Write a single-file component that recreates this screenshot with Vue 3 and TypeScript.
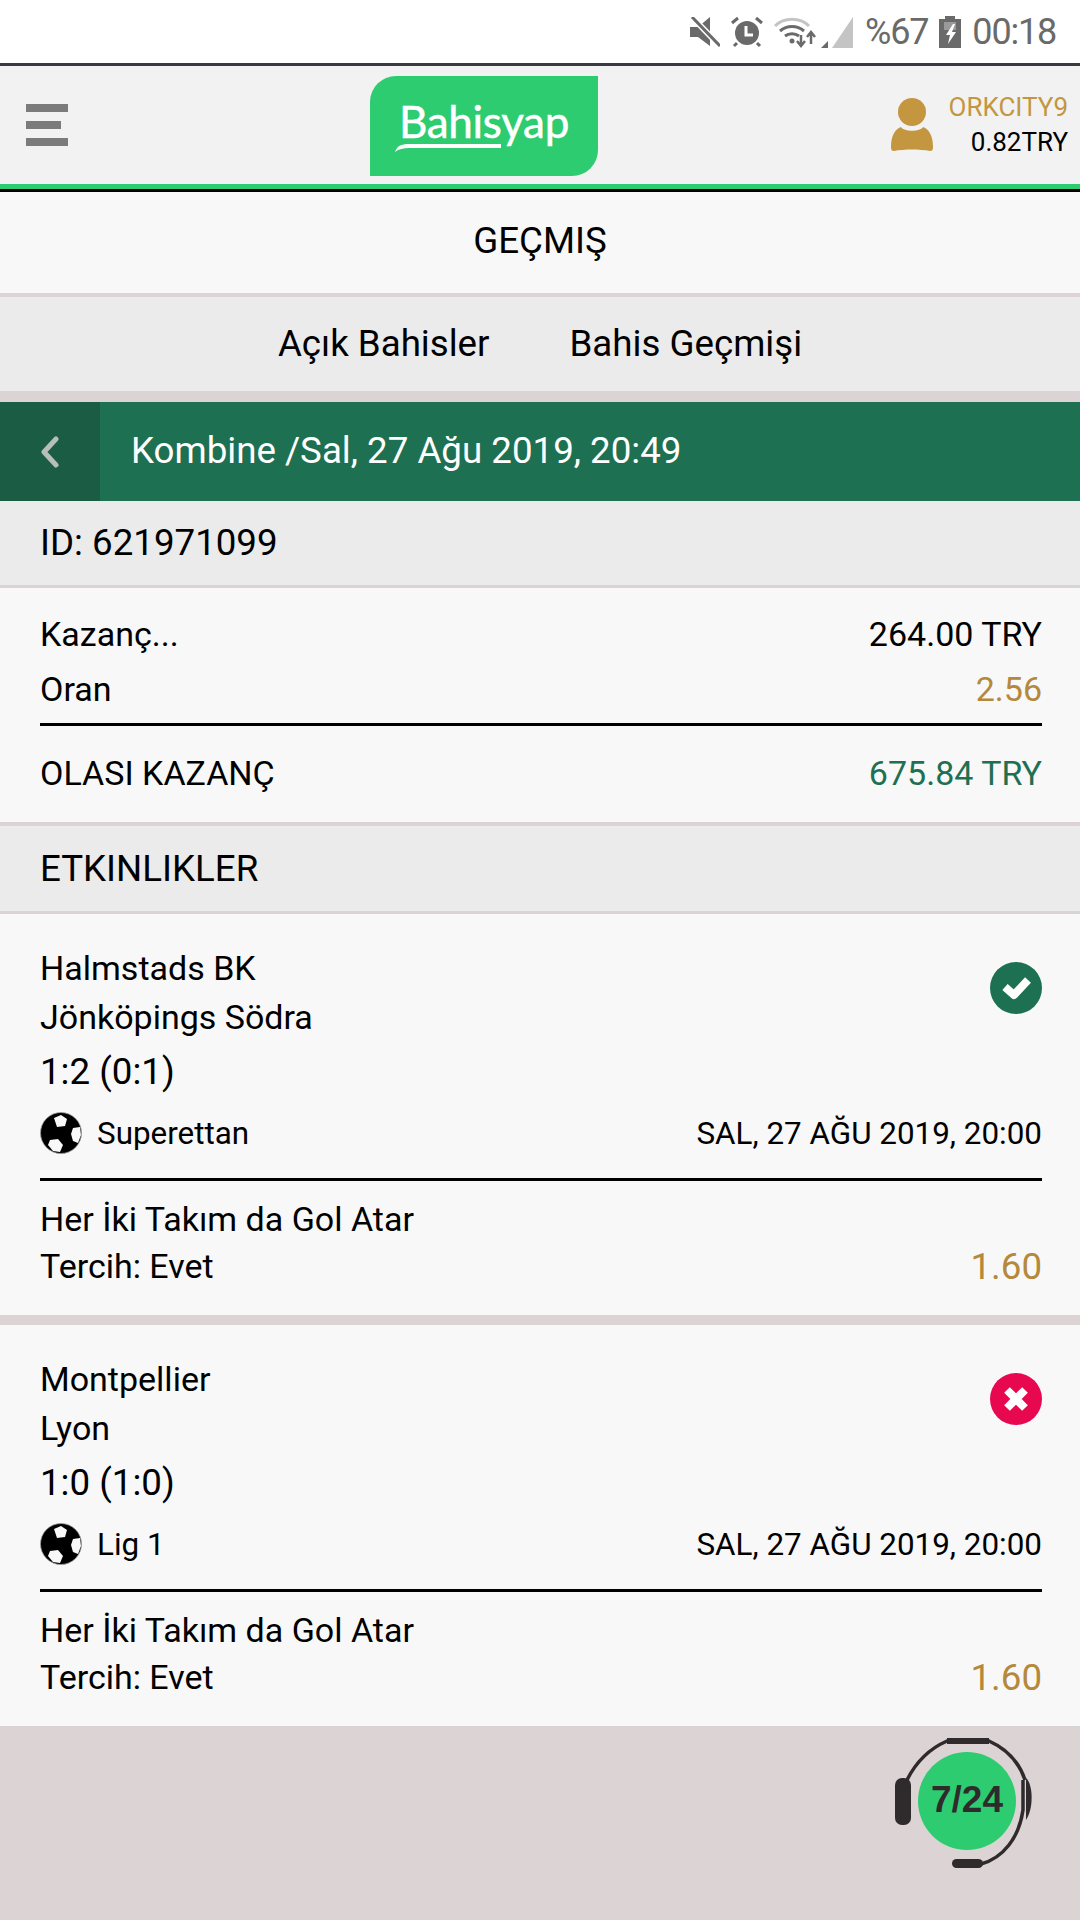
<script setup lang="ts">
interface BetEvent {
  home: string
  away: string
  score: string
  league: string
  date: string
  market: string
  pick: string
  odd: string
  won: boolean
}

const events: BetEvent[] = [
  {
    home: 'Halmstads BK',
    away: 'Jönköpings Södra',
    score: '1:2 (0:1)',
    league: 'Superettan',
    date: 'SAL, 27 AĞU 2019, 20:00',
    market: 'Her İki Takım da Gol Atar',
    pick: 'Tercih: Evet',
    odd: '1.60',
    won: true
  },
  {
    home: 'Montpellier',
    away: 'Lyon',
    score: '1:0 (1:0)',
    league: 'Lig 1',
    date: 'SAL, 27 AĞU 2019, 20:00',
    market: 'Her İki Takım da Gol Atar',
    pick: 'Tercih: Evet',
    odd: '1.60',
    won: false
  }
]
</script>

<template>
  <div class="page">
    <div class="status">
      <svg class="st-mute" viewBox="0 0 30 30" width="30" height="30">
        <path d="M0 10h8L20 0v29L8 20H0z" fill="#6a6a6a" />
        <path d="M2 0l28 29" stroke="#fff" stroke-width="6" fill="none" />
        <path d="M2 0l28 29" stroke="#6a6a6a" stroke-width="3" fill="none" />
      </svg>
      <svg class="st-alarm" viewBox="0 0 32 32" width="32" height="32">
        <circle cx="16" cy="17" r="12" fill="#6a6a6a" />
        <path d="M1 7l6-5M31 7l-6-5M6 27l-3 3M26 27l3 3" stroke="#6a6a6a" stroke-width="3" fill="none" />
        <path d="M15 10v9h7" stroke="#fff" stroke-width="3" fill="none" />
      </svg>
      <svg class="st-wifi" viewBox="0 0 44 32" width="44" height="32">
        <path d="M1 10C10 1 26 1 35 10" stroke="#c4c4c4" stroke-width="3" fill="none" />
        <path d="M6 15c7-6 17-6 24 0M11 20c4-3 10-3 14 0" stroke="#6a6a6a" stroke-width="3" fill="none" />
        <circle cx="18" cy="25" r="2.5" fill="#6a6a6a" />
        <path d="M27 19v9M23 25l4 5 4-5" stroke="#6a6a6a" stroke-width="2.5" fill="none" />
        <path d="M37 28v-10M33 21l4-5 4 5" stroke="#6a6a6a" stroke-width="2.5" fill="none" />
      </svg>
      <svg class="st-signal" viewBox="0 0 32 32" width="32" height="32">
        <path d="M32 1v31H11z" fill="#c4c4c4" />
        <path d="M0 32l7-7v7z" fill="#6a6a6a" />
      </svg>
      <span class="st-pct">%67</span>
      <svg class="st-batt" viewBox="0 0 22 32" width="22" height="32">
        <path d="M6 0h10v3h6v29H0V3h6z" fill="#6a6a6a" />
        <path d="M5 6h12v8H5z" fill="#9a9a9a" />
        <path d="M14 8l-7 11h4l-2 9 8-12h-4l3-8z" fill="#fff" />
      </svg>
      <span class="st-time">00:18</span>
    </div>

    <header class="topbar">
      <div class="burger">
        <span></span>
        <span class="short"></span>
        <span></span>
      </div>
      <div class="logo">
        <span class="logo-text">Bahisyap</span>
        <svg class="logo-swoosh" viewBox="0 0 106 9" width="106" height="9">
          <path d="M0 9C2 3 6 1 14 1h92v4H14C8 5 4 6 0 9z" fill="#fff" />
        </svg>
      </div>
      <div class="user">
        <svg viewBox="0 0 42 54" width="42" height="54">
          <circle cx="21" cy="14" r="14" fill="#c3963f" />
          <path d="M10 29c3 5 19 5 22 0 6 2 10 9 10 20 0 3-1 4-3 4-10-2-26-2-36 0-2 0-3-1-3-4 0-11 4-18 10-20z" fill="#c3963f" />
        </svg>
        <div class="user-text">
          <span class="user-name">ORKCITY9</span>
          <span class="user-bal">0.82TRY</span>
        </div>
      </div>
    </header>

    <div class="title">GEÇMIŞ</div>

    <nav class="tabs">
      <span>Açık Bahisler</span>
      <span>Bahis Geçmişi</span>
    </nav>

    <div class="betbar">
      <div class="back">
        <svg viewBox="0 0 20 32" width="20" height="32">
          <path d="M16 3L4 16l12 13" stroke="#b7bfba" stroke-width="5" stroke-linecap="round" stroke-linejoin="round" fill="none" />
        </svg>
      </div>
      <span class="betbar-title">Kombine /Sal, 27 Ağu 2019, 20:49</span>
    </div>

    <div class="idrow">ID: 621971099</div>

    <section class="summary">
      <div class="sum-top">
        <div class="sum-line"><span>Kazanç...</span><span>264.00 TRY</span></div>
        <div class="sum-line"><span>Oran</span><span class="gold">2.56</span></div>
      </div>
      <div class="sum-total"><span>OLASI KAZANÇ</span><span class="green">675.84 TRY</span></div>
    </section>

    <div class="events-head">ETKINLIKLER</div>

    <section v-for="ev in events" :key="ev.home" class="event">
      <div class="ev-top">
        <div class="ev-row">
          <span>{{ ev.home }}</span>
          <svg v-if="ev.won" class="result" viewBox="0 0 52 52" width="52" height="52">
            <circle cx="26" cy="26" r="26" fill="#1e7052" />
            <path d="M15 25l9 8L38 18" stroke="#fff" stroke-width="8" stroke-linejoin="round" fill="none" />
          </svg>
          <svg v-else class="result" viewBox="0 0 52 52" width="52" height="52">
            <circle cx="26" cy="26" r="26" fill="#e8084f" />
            <path d="M17 17l18 18M35 17L17 35" stroke="#fff" stroke-width="8" fill="none" />
          </svg>
        </div>
        <div class="ev-away">{{ ev.away }}</div>
        <div class="ev-score">{{ ev.score }}</div>
        <div class="ev-meta">
          <div class="ev-league">
            <svg viewBox="0 0 42 42" width="42" height="42">
              <circle cx="21" cy="21" r="20.5" fill="#000" stroke="#999" stroke-width="0.8" />
              <path d="M14 6l7-3 6 4-2 7-8 1z" fill="#f8f8f8" />
              <path d="M33 16l7-1 1 8-3 8-5-2-2-7z" fill="#f8f8f8" />
              <path d="M10 28l8-1 5 6-3 7-7-1-5-6z" fill="#f8f8f8" />
            </svg>
            <span class="ev-league-name">{{ ev.league }}</span>
          </div>
          <span class="ev-date">{{ ev.date }}</span>
        </div>
      </div>
      <div class="ev-bottom">
        <div class="ev-market">{{ ev.market }}</div>
        <div class="ev-pick">
          <span>{{ ev.pick }}</span>
          <span class="gold ev-odd">{{ ev.odd }}</span>
        </div>
      </div>
    </section>

    <div class="support">
      <svg viewBox="0 0 140 132" width="140" height="132">
        <path d="M12 42C22 22 36 10 52 3H94C112 11 124 24 130 42" stroke="#2f2b2d" stroke-width="3.5" fill="none" />
        <path d="M52 3H94" stroke="#2f2b2d" stroke-width="6" fill="none" />
        <rect x="0" y="40" width="16" height="47" rx="7" fill="#2f2b2d" />
        <path d="M131 40c7 6 8 30 0 42z" fill="#2f2b2d" />
        <path d="M128 42V72C124 100 108 120 86 126" stroke="#2f2b2d" stroke-width="3.5" fill="none" />
        <rect x="57" y="121" width="31" height="9" rx="4.5" fill="#2f2b2d" />
        <circle cx="72" cy="63" r="49" fill="#2ecc71" />
      </svg>
      <span class="support-text">7/24</span>
    </div>
  </div>
</template>

<style scoped>
.page {
  position: relative;
  min-height: 1920px;
  width: 1080px;
  background: #dcd3d5;
  color: #000;
  font-family: Roboto, "Liberation Sans", sans-serif;
  font-size: 34px;
  display: flex;
  flex-direction: column;
}

.status {
  height: 63px;
  background: #fff;
  display: flex;
  align-items: center;
  justify-content: flex-end;
  padding-right: 24px;
  color: #6a6a6a;
  border-bottom: 3px solid #3a3a42;
}

.st-mute { margin-right: 11px; }
.st-alarm { margin-right: 11px; }
.st-wifi { margin-right: 3px; }
.st-signal { margin-right: 12px; }
.st-batt { margin: 0 11px; }
.st-pct, .st-time {
  font-size: 36px;
  line-height: 40px;
  letter-spacing: -1.2px;
}

.topbar {
  height: 118px;
  background: #f2f2f2;
  border-bottom: 5px solid #2ecc71;
  display: flex;
  align-items: center;
  position: relative;
}

.burger {
  width: 42px;
  margin-left: 26px;
  display: flex;
  flex-direction: column;
  gap: 9px;
  margin-top: -1px;
}

.burger span {
  height: 8px;
  background: #7b7b7b;
}

.burger .short { width: 35px; }

.logo {
  width: 228px;
  height: 100px;
  margin-left: 302px;
  background: #2ecc71;
  border-radius: 26px 0 26px 0;
  display: flex;
  flex-direction: column;
  align-items: center;
  color: #fff;
  margin-top: 2px;
}

.logo-text {
  font-family: Lato, "Open Sans", sans-serif;
  font-size: 44px;
  letter-spacing: -0.3px;
  line-height: 48px;
  margin-top: 21px;
  -webkit-text-stroke: 0.5px #fff;
}

.logo-swoosh {
  margin-top: -2px;
  margin-left: -72px;
}

.user {
  margin-left: auto;
  margin-right: 12px;
  display: flex;
  align-items: center;
  gap: 16px;
}

.user-text {
  display: flex;
  flex-direction: column;
  align-items: flex-end;
  font-size: 26px;
  line-height: 35px;
}

.user-name { color: #c3963f; }

.title {
  border-top: 3px solid #000;
  height: 97px;
  background: #f8f8f8;
  border-bottom: 4px solid #dcd3d5;
  display: flex;
  align-items: center;
  justify-content: center;
  font-size: 36.7px;
  padding-bottom: 4px;
}

.tabs {
  height: 92px;
  background: #ebebeb;
  border-bottom: 11px solid #dcd3d5;
  display: flex;
  align-items: center;
  justify-content: center;
  gap: 80px;
  font-size: 36.7px;
  padding-bottom: 2px;
}

.betbar {
  height: 99px;
  background: #1e7052;
  display: flex;
  align-items: center;
  color: #fff;
}

.back {
  width: 100px;
  height: 100%;
  background: #1a5c44;
  display: flex;
  align-items: center;
  justify-content: center;
}

.betbar-title {
  margin-left: 31px;
  margin-bottom: 2px;
  font-size: 36.7px;
}

.idrow {
  height: 82px;
  background: #ebebeb;
  border-bottom: 3px solid #dcd3d5;
  padding-left: 40px;
  padding-bottom: 2px;
  display: flex;
  align-items: center;
  font-size: 36.7px;
}

.summary {
  background: #f8f8f8;
  height: 234px;
  padding: 0 38px 0 40px;
  border-bottom: 4px solid #dcd3d5;
}

.sum-top {
  height: 138px;
  padding-top: 19px;
  box-sizing: border-box;
  border-bottom: 3px solid #000;
}

.sum-line {
  display: flex;
  justify-content: space-between;
  line-height: 55px;
}

.sum-total {
  display: flex;
  justify-content: space-between;
  align-items: center;
  height: 94px;
}

.gold { color: #b5893c; }
.green { color: #1e7052; }

.events-head {
  height: 85px;
  background: #ebebeb;
  border-bottom: 3px solid #dcd3d5;
  padding-left: 40px;
  display: flex;
  align-items: center;
  font-size: 36.7px;
}

.event {
  background: #f8f8f8;
  padding: 0 38px 0 40px;
  margin-bottom: 10px;
}

.event:last-of-type { margin-bottom: 0; }

.ev-top {
  height: 267px;
  padding-top: 28px;
  box-sizing: border-box;
  border-bottom: 3px solid #000;
}

.ev-row {
  display: flex;
  justify-content: space-between;
  align-items: flex-start;
  line-height: 52px;
  height: 52px;
}

.result { margin-top: 20px; }

.ev-away { line-height: 46px; }

.ev-score {
  font-size: 36.7px;
  line-height: 64px;
}

.ev-meta {
  display: flex;
  justify-content: space-between;
  align-items: center;
  height: 58px;
  font-size: 31.4px;
}

.ev-league {
  display: flex;
  align-items: center;
  gap: 15px;
}

.ev-bottom {
  height: 134px;
  padding-top: 14px;
  box-sizing: border-box;
}

.ev-market { line-height: 48px; }

.ev-pick {
  display: flex;
  justify-content: space-between;
  align-items: center;
  line-height: 47px;
}

.ev-odd { font-size: 36.7px; }

.support {
  position: absolute;
  left: 895px;
  top: 1738px;
  width: 140px;
  height: 132px;
}

.support-text {
  position: absolute;
  left: 30px;
  top: 41px;
  width: 84px;
  text-align: center;
  font-family: "Liberation Sans", sans-serif;
  font-weight: 700;
  font-size: 37px;
  line-height: 42px;
  color: #2f2b2d;
}
</style>

<style>
html, body { margin: 0; padding: 0; }
</style>
